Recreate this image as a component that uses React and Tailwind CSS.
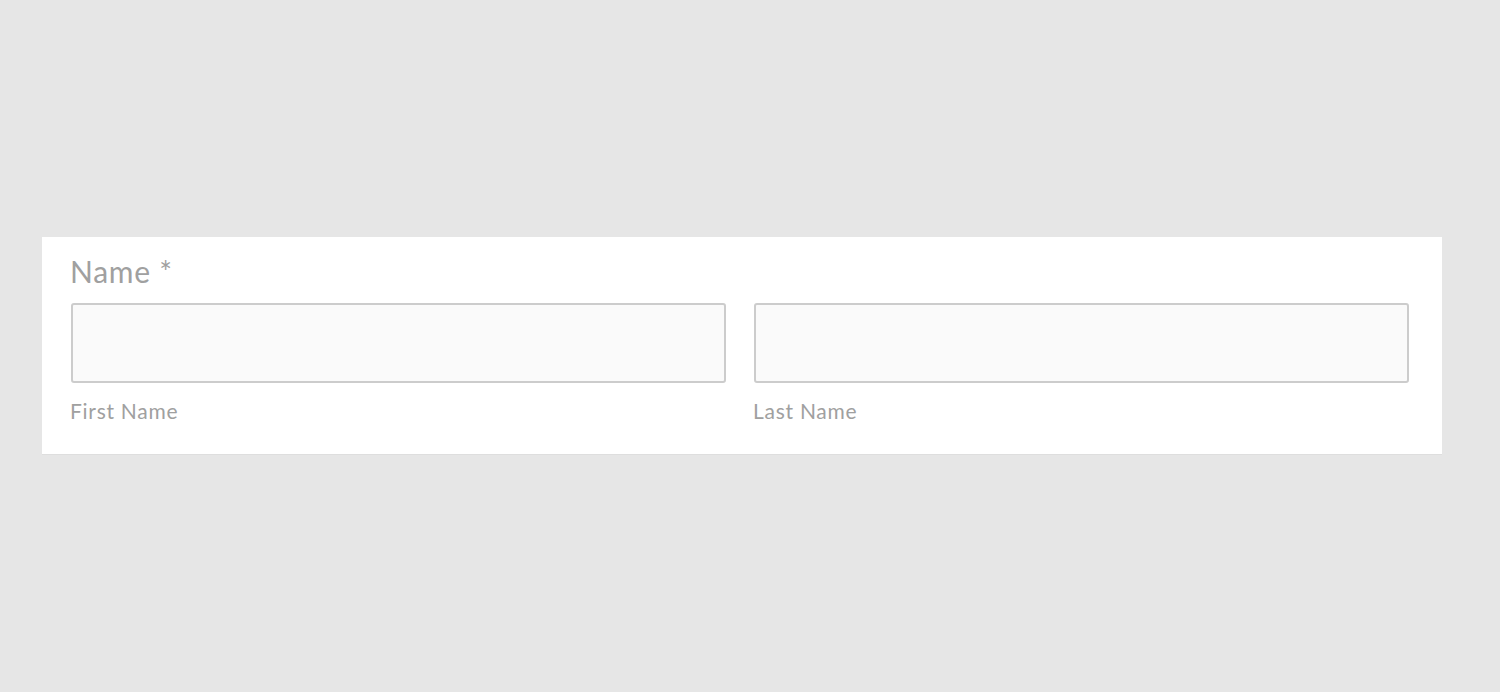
export default function App() {
  return (
    <div className="min-h-screen bg-[#e6e6e6] pt-[237px] pl-[42px] font-['Lato',sans-serif]">
      <div className="w-[1400px] h-[217px] bg-white pl-[29px] pr-[33px] pt-[16px] shadow-[0_1px_0_#dedede]">
        <div className="-ml-px text-[30px] leading-[36px] tracking-[0.025em] text-[#a0a0a0]">Name *</div>
        <div className="mt-[14px] flex gap-[28px]">
          <div className="flex-1">
            <input className="block w-full h-[80px] rounded-[3px] border-2 border-[#cccccc] bg-[#fafafa] outline-none" />
            <div className="-ml-px mt-[16px] text-[21px] leading-[24px] tracking-[0.035em] text-[#a0a0a0]">First Name</div>
          </div>
          <div className="flex-1">
            <input className="block w-full h-[80px] rounded-[3px] border-2 border-[#cccccc] bg-[#fafafa] outline-none" />
            <div className="-ml-px mt-[16px] text-[21px] leading-[24px] tracking-[0.035em] text-[#a0a0a0]">Last Name</div>
          </div>
        </div>
      </div>
    </div>
  )
}
